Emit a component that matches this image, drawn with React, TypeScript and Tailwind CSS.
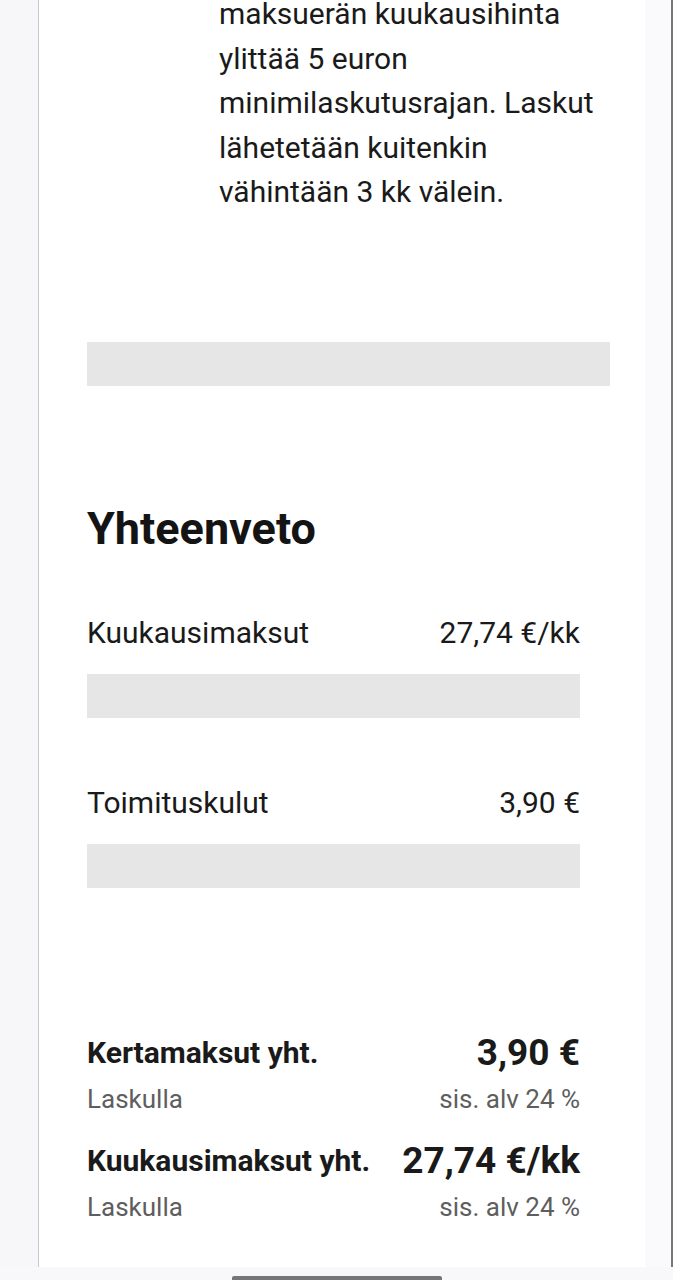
import React from 'react';

const rows = [
    {label: 'Kuukausimaksut', value: '27,74 €/kk'},
    {label: 'Toimituskulut', value: '3,90 €'},
];

const totals = [
    {label: 'Kertamaksut yht.', value: '3,90 €'},
    {label: 'Kuukausimaksut yht.', value: '27,74 €/kk'},
];

const App: React.FC = () => {
    return (
        <div className="h-[1280px] overflow-hidden bg-[#f8f8fa] flex flex-col text-[#1a1a1a]"
             style={{fontFamily: 'Roboto, "Noto Sans", sans-serif'}}>
            <div className="flex h-[1267px] shrink-0">
                <div className="w-[39px] shrink-0 bg-[#f7f7fa] border-r border-[#c9c9cc]"/>

                <div className="w-[606px] shrink-0 bg-white pl-[48px]">
                    {/* Ehtoteksti */}
                    <div className="ml-[132px] w-[390px] -mt-[8px] text-[30px] leading-[44.6px]">
                        maksuerän kuukausihinta ylittää 5 euron minimilaskutusrajan. Laskut lähetetään kuitenkin
                        vähintään 3 kk välein.
                    </div>

                    <div className="mt-[127px] w-[523px] h-[44px] bg-[#e6e6e6]"/>

                    <h2 className="mt-[120px] text-[45px] leading-[45px] font-bold text-[#141414]">Yhteenveto</h2>

                    <div className="mt-[60px] w-[493px]">
                        {rows.map((row, i) => (
                            <div key={row.label} className={i > 0 ? 'mt-[63px]' : ''}>
                                <div className="flex justify-between items-center h-[44px] text-[30px] leading-[44px]">
                                    <span>{row.label}</span>
                                    <span>{row.value}</span>
                                </div>
                                <div className="mt-[19px] h-[44px] bg-[#e6e6e6]"/>
                            </div>
                        ))}
                    </div>

                    {/* Yhteensä */}
                    <div className="mt-[143px] w-[493px]">
                        {totals.map((t, i) => (
                            <div key={t.label} className={i > 0 ? 'mt-[18px]' : ''}>
                                <div className="flex justify-between items-center h-[44px] font-bold">
                                    <span className="text-[30px] leading-[44px]">{t.label}</span>
                                    <span className="text-[37px] leading-[44px]">{t.value}</span>
                                </div>
                                <div
                                    className="mt-[2px] flex justify-between items-center h-[44px] text-[26px] leading-[44px] text-[#5e5e5e]">
                                    <span>Laskulla</span>
                                    <span>sis. alv 24 %</span>
                                </div>
                            </div>
                        ))}
                    </div>
                </div>

                <div className="flex-1 bg-[#fafafc] border-r-2 border-[#777777]"/>
            </div>

            <div className="flex-1 flex justify-center items-end">
                <div className="w-[210px] h-[4px] rounded-t-[2px] bg-[#767676]"/>
            </div>
        </div>
    );
};

export default App;
